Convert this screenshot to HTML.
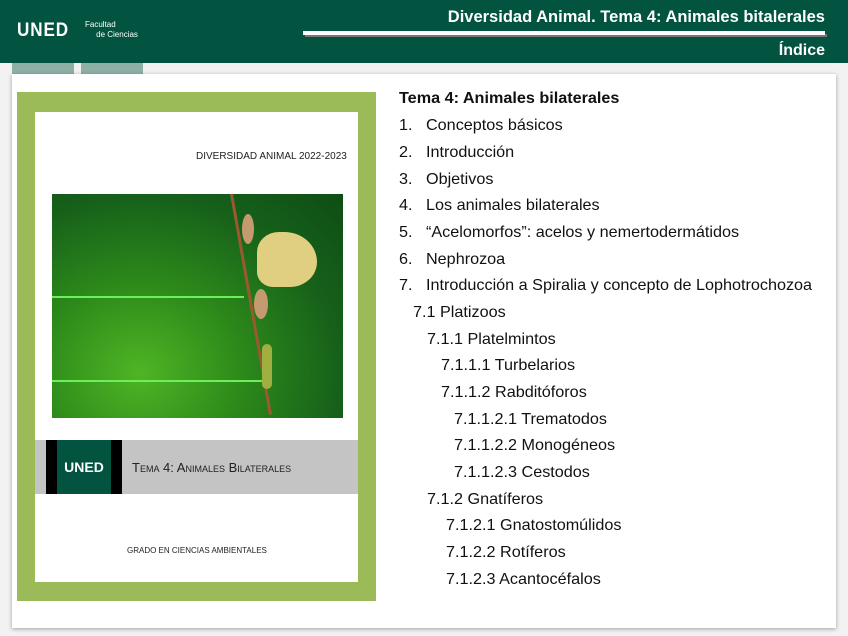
<!DOCTYPE html>
<html><head><meta charset="utf-8"><style>
*{margin:0;padding:0;box-sizing:border-box}
body{width:848px;height:636px;background:#f2f2f2;position:relative;overflow:hidden;font-family:"Liberation Sans",sans-serif}
.hdr{position:absolute;left:0;top:0;width:848px;height:63px;background:#02533f}
.abs{position:absolute}
.tab{position:absolute;top:63px;height:12px;background:#8fb0a6}
.panel{position:absolute;left:12px;top:74px;width:824px;height:554px;background:#fff;box-shadow:0 1px 4px rgba(0,0,0,.35)}
.li{position:absolute;font-size:16.2px;color:#111;white-space:nowrap;transform:scaleY(0.95)}
</style></head><body>
<div class="hdr">
 <div class="abs" style="left:17px;top:20px;color:#fff;font-weight:bold;font-size:19px;letter-spacing:1px;transform:scaleX(0.9);transform-origin:left">UNED</div>
 <div class="abs" style="left:85px;top:20px;color:#fff;font-size:8px;line-height:10px">Facultad<br>&nbsp;&nbsp;&nbsp;&nbsp;&nbsp;de Ciencias</div>
 <div class="abs" style="right:23px;top:8px;color:#fff;font-weight:bold;font-size:16.5px">Diversidad Animal. Tema 4: Animales bitalerales</div>
 <div class="abs" style="left:305px;top:34px;width:522px;height:3px;background:#777"></div>
 <div class="abs" style="left:303px;top:31px;width:522px;height:4px;background:#fff"></div>
 <div class="abs" style="right:23px;top:42px;color:#fff;font-weight:bold;font-size:16px">Índice</div>
</div>
<div class="tab" style="left:12px;width:62px"></div>
<div class="tab" style="left:81px;width:62px"></div>
<div class="panel"></div>
<div class="abs" style="left:17px;top:92px;width:359px;height:509px;background:#9bbb59"></div>
<div class="abs" style="left:35px;top:112px;width:323px;height:470px;background:#fff"></div>
<div class="abs" style="left:196px;top:151px;font-size:10px;color:#222">DIVERSIDAD ANIMAL 2022-2023</div>
<div class="abs" style="left:52px;top:194px;width:291px;height:224px;background:radial-gradient(ellipse at 30% 80%,#4fb525 0%,#2d8a1a 35%,#16601a 70%,#0e4d14 100%)">
 <div class="abs" style="left:0;top:102px;width:192px;height:2px;background:#6cf05a"></div>
 <div class="abs" style="left:0;top:186px;width:210px;height:2px;background:#6cf05a"></div>
 <div class="abs" style="left:178px;top:0;width:3px;height:224px;background:#9a5a30;transform:rotate(-10deg);transform-origin:top"></div>
 <div class="abs" style="left:205px;top:38px;width:60px;height:55px;background:#e0cf80;border-radius:40% 60% 50% 30%"></div>
 <div class="abs" style="left:190px;top:20px;width:12px;height:30px;background:#c49a70;border-radius:50%"></div>
 <div class="abs" style="left:202px;top:95px;width:14px;height:30px;background:#c49a70;border-radius:50%"></div>
 <div class="abs" style="left:210px;top:150px;width:10px;height:45px;background:#a0b040;border-radius:5px"></div>
</div>
<div class="abs" style="left:35px;top:440px;width:323px;height:54px;background:#c4c4c4"></div>
<div class="abs" style="left:46px;top:440px;width:76px;height:54px;background:#000"></div>
<div class="abs" style="left:57px;top:440px;width:54px;height:54px;background:#02533f;color:#fff;font-weight:bold;font-size:14px;text-align:center;line-height:54px">UNED</div>
<div class="abs" style="left:132px;top:460px;font-size:13px;color:#222;font-variant:small-caps">Tema 4: Animales Bilaterales</div>
<div class="abs" style="left:127px;top:546px;font-size:8px;color:#222">GRADO EN CIENCIAS AMBIENTALES</div>
<div class="li" style="left:399px;top:89px;font-weight:bold">Tema 4: Animales bilaterales</div>
<div class="li" style="left:399px;top:116px">1.&nbsp;&nbsp; Conceptos básicos</div>
<div class="li" style="left:399px;top:143px">2.&nbsp;&nbsp; Introducción</div>
<div class="li" style="left:399px;top:170px">3.&nbsp;&nbsp; Objetivos</div>
<div class="li" style="left:399px;top:196px">4.&nbsp;&nbsp; Los animales bilaterales</div>
<div class="li" style="left:399px;top:223px">5.&nbsp;&nbsp; “Acelomorfos”: acelos y nemertodermátidos</div>
<div class="li" style="left:399px;top:250px">6.&nbsp;&nbsp; Nephrozoa</div>
<div class="li" style="left:399px;top:276px">7.&nbsp;&nbsp; Introducción a Spiralia y concepto de Lophotrochozoa</div>
<div class="li" style="left:413px;top:303px">7.1 Platizoos</div>
<div class="li" style="left:427px;top:330px">7.1.1 Platelmintos</div>
<div class="li" style="left:441px;top:356px">7.1.1.1 Turbelarios</div>
<div class="li" style="left:441px;top:383px">7.1.1.2 Rabditóforos</div>
<div class="li" style="left:454px;top:410px">7.1.1.2.1 Trematodos</div>
<div class="li" style="left:454px;top:436px">7.1.1.2.2 Monogéneos</div>
<div class="li" style="left:454px;top:463px">7.1.1.2.3 Cestodos</div>
<div class="li" style="left:427px;top:490px">7.1.2 Gnatíferos</div>
<div class="li" style="left:446px;top:516px">7.1.2.1 Gnatostomúlidos</div>
<div class="li" style="left:446px;top:543px">7.1.2.2 Rotíferos</div>
<div class="li" style="left:446px;top:570px">7.1.2.3 Acantocéfalos</div>
</body></html>
